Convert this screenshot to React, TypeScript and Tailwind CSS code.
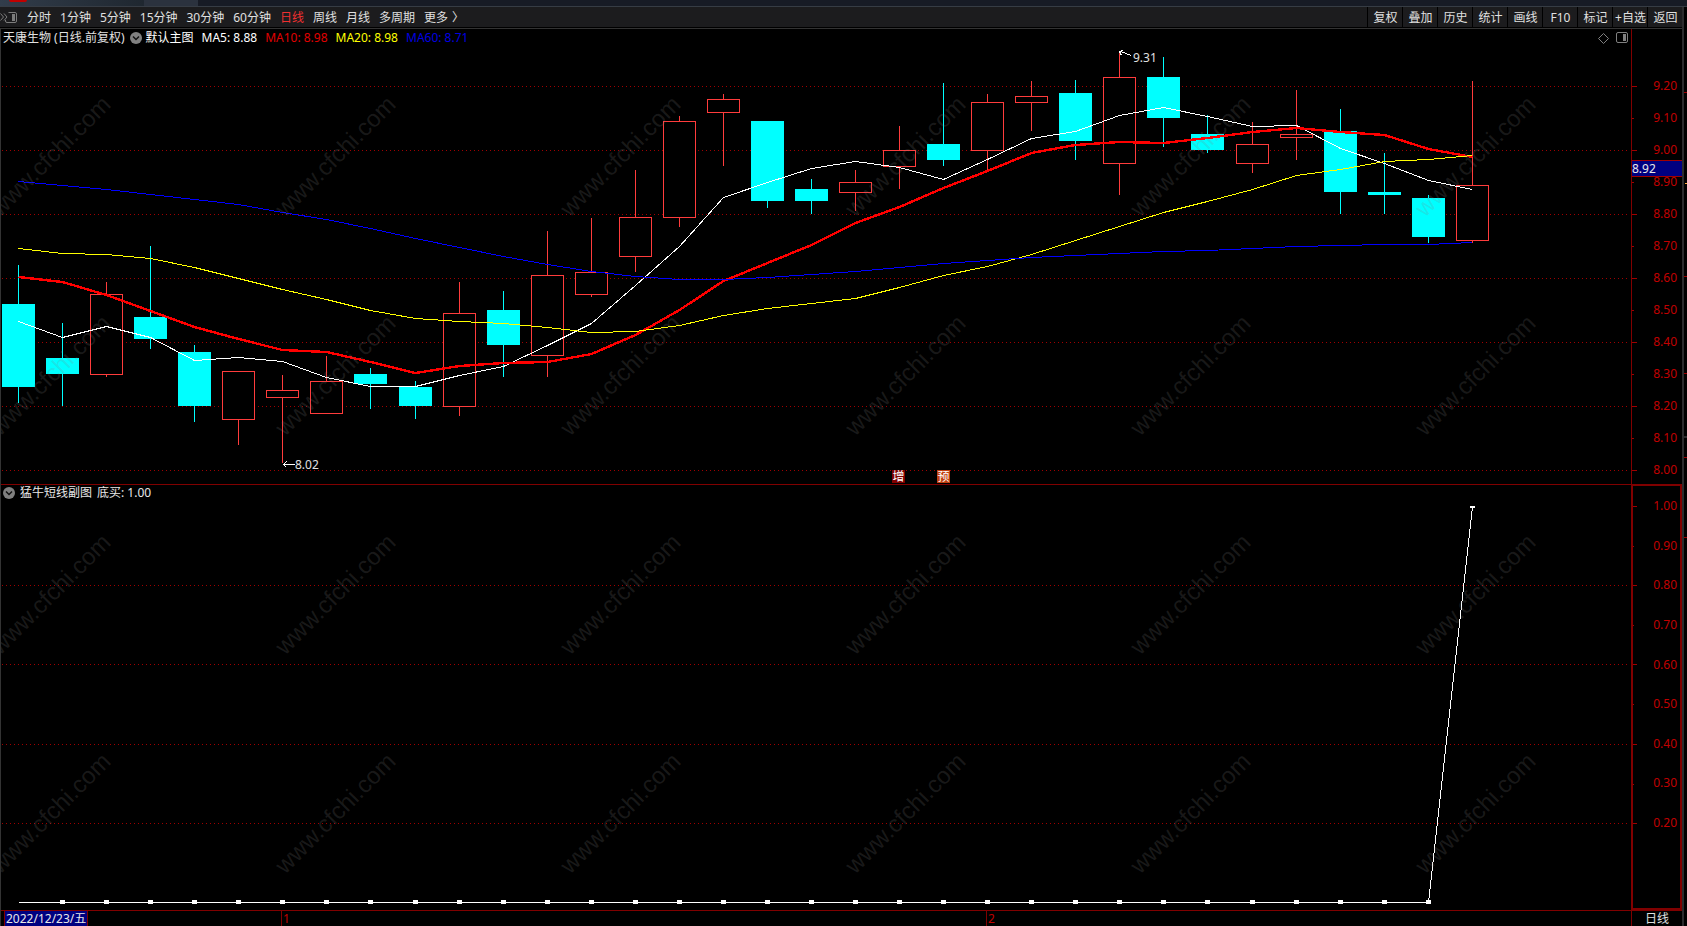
import React from 'react';

type Candle = { up: boolean; high: number; top: number; bottom: number; low: number };

const FONT = "font-['Noto_Sans','Noto_Sans_CJK_SC',sans-serif]";

// chart coordinate space, shared by both panels
const LEFT = 1;
const CHART_W = 1630;
const MAIN_TOP = 29;
const MAIN_H = 455;
const SUB_TOP = 485;
const SUB_H = 425;

const xAt = (i: number) => Math.floor(18.51 + i * 44.055);
const pctX = (x: number) => `${((x - LEFT) / CHART_W) * 100}%`;
const pctY = (y: number) => `${((y - MAIN_TOP) / MAIN_H) * 100}%`;

const up = (high: number, top: number, bottom: number, low: number): Candle => ({ up: true, high, top, bottom, low });
const down = (high: number, top: number, bottom: number, low: number): Candle => ({ up: false, high, top, bottom, low });

const candles: Candle[] = [
  down(265, 304, 387, 403),
  down(323, 358, 374, 406),
  up(282, 294, 375, 377),
  down(246, 317, 339, 349),
  down(345, 352, 406, 422),
  up(371, 371, 420, 445),
  up(375, 390, 398, 463),
  up(356, 381, 414, 414),
  down(368, 374, 384, 409),
  down(381, 387, 406, 419),
  up(282, 313, 407, 416),
  down(291, 310, 345, 377),
  up(231, 275, 356, 377),
  up(218, 272, 295, 297),
  up(170, 217, 257, 272),
  up(116, 121, 218, 227),
  up(94, 99, 113, 166),
  down(121, 121, 201, 208),
  down(179, 189, 201, 214),
  up(170, 182, 193, 211),
  up(126, 150, 167, 189),
  down(83, 144, 160, 166),
  up(94, 102, 151, 170),
  up(81, 96, 103, 131),
  down(80, 93, 141, 160),
  up(52, 77, 164, 195),
  down(57, 77, 118, 147),
  down(115, 134, 150, 153),
  up(122, 144, 164, 173),
  up(90, 134, 138, 160),
  down(109, 131, 192, 214),
  down(153, 192, 195, 214),
  down(195, 198, 237, 243),
  up(81, 185, 241, 243),
];

const averages = [
  {
    label: 'MA5: 8.88',
    textClass: 'text-white',
    color: '#ffffff',
    width: 1,
    values: [321, 337, 326, 337, 360, 357, 361, 377, 386, 386, 375, 366, 345, 323, 285, 246, 197, 182, 168, 161, 167, 179, 159, 138, 131, 115, 107, 116, 126, 125, 148, 163, 180, 189],
  },
  {
    label: 'MA10: 8.98',
    textClass: 'text-[#e00000]',
    color: '#ff0000',
    width: 2.4,
    values: [277, 282, 295, 311, 327, 339, 350, 352, 362, 373, 366, 363, 362, 354, 335, 310, 281, 263, 245, 223, 207, 188, 171, 153, 145, 142, 143, 138, 132, 128, 132, 135, 149, 157],
  },
  {
    label: 'MA20: 8.98',
    textClass: 'text-[#ffff00]',
    color: '#ffff00',
    width: 1,
    values: [248, 253, 254, 258, 267, 278, 289, 299, 310, 318, 321, 323, 327, 332, 331, 325, 315, 308, 303, 298, 287, 275, 266, 254, 240, 226, 212, 201, 189, 175, 169, 161, 159, 155],
  },
  {
    label: 'MA60: 8.71',
    textClass: 'text-[#0000e0]',
    color: '#0000ff',
    width: 1,
    values: [181, 185, 189, 194, 199, 204, 212, 219, 228, 238, 247, 256, 264, 271, 276, 279, 279, 277, 274, 271, 267, 263, 260, 257, 255, 253, 251, 250, 248, 246, 245, 244, 244, 242],
  },
];

const periods = ['分时', '1分钟', '5分钟', '15分钟', '30分钟', '60分钟', '日线', '周线', '月线', '多周期'];
const tools = ['复权', '叠加', '历史', '统计', '画线', 'F10', '标记', '+自选', '返回'];

const priceLabels = ['9.20', '9.10', '9.00', '8.90', '8.80', '8.70', '8.60', '8.50', '8.40', '8.30', '8.20', '8.10', '8.00'];
const subLabels = ['1.00', '0.90', '0.80', '0.70', '0.60', '0.50', '0.40', '0.30', '0.20'];
const subTicks = [506, 546, 585, 625, 664, 704, 744, 784, 823];

const PanelIcon: React.FC<{ className?: string }> = ({ className }) => (
  <svg width="12" height="12" viewBox="0 0 12 12" className={className} aria-hidden="true">
    <rect x="0.5" y="0.5" width="11" height="10" rx="1.5" fill="none" stroke="currentColor" />
    <rect x="7" y="2" width="3" height="7" fill="currentColor" />
  </svg>
);

const DropButton: React.FC<{ label: string }> = ({ label }) => (
  <button aria-label={label} className="shrink-0">
    <svg width="12" height="12" viewBox="0 0 12 12" className="block">
      <circle cx="6" cy="6" r="6" fill="#808080" />
      <path d="M3 4.5 L6 7.5 L9 4.5" fill="none" stroke="#111" strokeWidth="1.5" />
    </svg>
  </button>
);

const Toolbar = () => (
  <nav className="flex h-[20px] shrink-0 items-stretch justify-between bg-[#1c1c1e] text-xs leading-4 text-[#e0e0e0]">
    <div className="flex items-center gap-[9px] pt-[2px]">
      <button aria-label="侧栏" className="flex w-[18px] items-center text-[#7c7c7c]">
        <svg width="18" height="12" viewBox="0 0 18 12" fill="none" stroke="currentColor">
          <path d="M0.5 1.5 L3.5 5 L0.5 8.5 M4 1.5 L7 5 L4 8.5" />
          <path d="M8.5 0.5 H15 Q16.500 0.5 16.500 2 V9 Q16.500 10.500 15 10.500 H7 Q5.500 10.500 5.500 9 V8" />
          <rect x="12" y="2" width="3" height="7" fill="currentColor" stroke="none" />
        </svg>
      </button>
      {periods.map((p) => (
        <button key={p} className={p === '日线' ? 'text-[#f03030]' : ''}>
          {p}
        </button>
      ))}
      <button className="flex gap-1">
        <span>更多</span>
        <span>〉</span>
      </button>
    </div>
    <div className="flex">
      {tools.map((tool) => (
        <button key={tool} className="h-full w-[35px] border-l border-black pt-[2px] pl-px whitespace-nowrap">
          {tool}
        </button>
      ))}
    </div>
  </nav>
);

const MainChart = () => (
  <svg
    viewBox={`${LEFT} ${MAIN_TOP} ${CHART_W} ${MAIN_H}`}
    preserveAspectRatio="none"
    shapeRendering="crispEdges"
    className="absolute inset-0 h-full w-full"
  >
    <g transform="translate(0 0.5)" stroke="#a00000" strokeDasharray="1 3">
      {[86, 150, 214, 278, 342, 406, 470].map((y) => (
        <line key={y} x1="2" x2="1628" y1={y} y2={y} />
      ))}
    </g>
    {candles.map((c, i) => {
      const x = xAt(i);
      const color = c.up ? '#ff3c3c' : '#00ffff';
      return (
        <g key={i}>
          <rect x={x} y={c.high} width="1" height={c.low - c.high} fill={color} />
          {c.up ? (
            <rect x={x - 15.5} y={c.top + 0.5} width="32" height={c.bottom - c.top - 1} fill="#000" stroke={color} />
          ) : (
            <rect x={x - 16} y={c.top} width="33" height={c.bottom - c.top} fill={color} />
          )}
        </g>
      );
    })}
    {averages.map((ma) => (
      <polyline
        key={ma.label}
        transform={ma.width > 1 ? 'translate(0.5 0)' : 'translate(0.5 0.5)'}
        points={ma.values.map((y, i) => `${xAt(i)},${y}`).join(' ')}
        fill="none"
        stroke={ma.color}
        strokeWidth={ma.width}
      />
    ))}
    {/* high / low pointers */}
    <g transform="translate(0.5 0.5)" fill="none" stroke="#fff">
      <path d="M1120 51 L1131 55 M1123 50 L1119 51 L1121 55" />
      <path d="M282 464 H294 M286 461 L283 464 L286 467" />
    </g>
  </svg>
);

const SubChart = () => (
  <svg
    viewBox={`${LEFT} ${SUB_TOP} ${CHART_W} ${SUB_H}`}
    preserveAspectRatio="none"
    shapeRendering="crispEdges"
    className="absolute inset-0 h-full w-full"
  >
    <g transform="translate(0 0.5)" stroke="#a00000" strokeDasharray="1 3">
      {[585, 664, 744, 823].map((y) => (
        <line key={y} x1="2" x2="1628" y1={y} y2={y} />
      ))}
    </g>
    <polyline transform="translate(0.5 0.5)" points="18,902 1428,902 1472,506" fill="none" stroke="#fff" />
    {candles.slice(1, -1).map((_, i) => (
      <rect key={i} x={xAt(i + 1) - 2} y="900" width="5" height="4" fill="#fff" />
    ))}
    <rect x="1470" y="506" width="5" height="2" fill="#fff" />
  </svg>
);

const Watermarks = () => (
  <svg className="pointer-events-none absolute inset-0 h-full w-full overflow-hidden" aria-hidden="true">
    {[127, 346, 565, 784].map((y) =>
      [49, 334, 619, 904, 1189, 1474].map((x) => (
        <text
          key={`${x}-${y}`}
          transform={`translate(${x} ${y}) rotate(-45)`}
          textAnchor="middle"
          dominantBaseline="central"
          className="fill-[#808080]/20 font-['Liberation_Sans',sans-serif] text-[24px]"
        >
          www.cfchi.com
        </text>
      )),
    )}
  </svg>
);

const PriceAxis = () => (
  <div className="relative w-[51px] shrink-0 border-l border-[#800000]">
    <svg
      viewBox={`0 ${MAIN_TOP} 50 ${MAIN_H}`}
      preserveAspectRatio="none"
      shapeRendering="crispEdges"
      className="absolute inset-0 h-full w-full"
    >
      {priceLabels.map((label, i) => (
        <rect key={label} x="0" y={86 + i * 32} width={i % 2 ? 2 : 5} height="1" fill="#a00000" />
      ))}
    </svg>
    <ul className="flex h-full flex-col justify-between pt-[49px] pr-[5px] pb-[6px] text-right text-xs leading-4 text-[#c00000]">
      {priceLabels.map((label) => (
        <li key={label}>{label}</li>
      ))}
    </ul>
    <div
      className="absolute inset-x-0 h-[17px] border-y border-[#a00000] bg-[#000080] text-xs leading-[15px] text-[#e8e8e8]"
      style={{ top: pctY(160) }}
    >
      8.92
    </div>
  </div>
);

const SubAxis = () => (
  <div className="relative w-[51px] shrink-0 border-2 border-[#800000]">
    <svg
      viewBox="0 486 47 422"
      preserveAspectRatio="none"
      shapeRendering="crispEdges"
      className="absolute inset-0 h-full w-full"
    >
      {subTicks.map((y, i) => (
        <rect key={y} x="0" y={y} width={i % 2 ? 1 : 4} height="1" fill="#a00000" />
      ))}
    </svg>
    <ul className="flex h-full flex-col justify-between pt-3 pr-[3px] pb-[77px] text-right text-xs leading-4 text-[#c00000]">
      {subLabels.map((label) => (
        <li key={label}>{label}</li>
      ))}
    </ul>
  </div>
);

const SideStrip = () => (
  <svg
    viewBox="0 7 3 919"
    preserveAspectRatio="none"
    shapeRendering="crispEdges"
    className="h-full w-[3px] shrink-0"
    aria-hidden="true"
  >
    {[92, 276, 373, 457, 537].map((y) => (
      <rect key={y} x="0" y={y} width="3" height="1" fill="#a00000" />
    ))}
    <rect x="1" y="183" width="2" height="1" fill="#ffb040" />
    <rect x="0" y="436" width="3" height="2" fill="#2c2c2e" />
  </svg>
);

const App: React.FC = () => {
  return (
    <div className={`flex h-screen flex-col overflow-hidden bg-black ${FONT}`}>
      {/* Window title edge */}
      <div className="flex h-[7px] shrink-0 border-b border-[#363c44] bg-[#171b25]">
        <div className="w-36 bg-linear-to-r from-[#323d4b] to-[#1f2730] pl-[9px]">
          <div className="h-[2px] w-[18px] rounded-b-sm bg-[#c00000]" />
        </div>
        <div className="w-[54px] bg-[#2b323e]" />
      </div>

      <div className="flex min-h-0 flex-1">
        <div className="flex min-w-0 flex-1 flex-col">
          <Toolbar />
          <main className="mt-px flex min-h-0 flex-1 flex-col border-t border-l border-[#333]">
            <div className="relative flex min-h-0 flex-1 flex-col">
              {/* Candles */}
              <section className="flex min-h-0 flex-[455]">
                <div className="relative min-w-0 flex-1">
                  <MainChart />
                  <div className="relative flex items-center justify-between pt-[1px] pr-[3px] pl-[2px] text-xs leading-4">
                    <div className="flex items-center gap-2">
                      <div className="flex items-center gap-1 text-white">
                        <h1 className="pr-px text-[#e0e0e0]">天康生物 (日线.前复权)</h1>
                        <DropButton label="主图指标" />
                        <span>默认主图</span>
                      </div>
                      {averages.map((ma) => (
                        <span key={ma.label} className={ma.textClass}>
                          {ma.label}
                        </span>
                      ))}
                    </div>
                    <div className="flex items-center gap-[7px] text-[#808080]">
                      <button aria-label="标记">
                        <svg width="11" height="11" viewBox="0 0 11 11" className="block">
                          <path d="M5.5 0.5 L10.5 5.5 L5.5 10.5 L0.5 5.5 Z" fill="none" stroke="currentColor" />
                        </svg>
                      </button>
                      <button aria-label="面板">
                        <PanelIcon className="block" />
                      </button>
                    </div>
                  </div>
                  <span
                    className="absolute -translate-y-1/2 text-xs leading-4 text-[#e0e0e0]"
                    style={{ left: pctX(1133), top: pctY(58) }}
                  >
                    9.31
                  </span>
                  <span
                    className="absolute -translate-y-1/2 text-xs leading-4 text-[#e0e0e0]"
                    style={{ left: pctX(295), top: pctY(465) }}
                  >
                    8.02
                  </span>
                  <span
                    className="absolute bottom-px w-[13px] bg-[#800000] text-center text-xs leading-[13px] text-white"
                    style={{ left: pctX(892) }}
                  >
                    增
                  </span>
                  <span
                    className="absolute bottom-px w-[13px] bg-[#c04010] text-center text-xs leading-[13px] text-white"
                    style={{ left: pctX(937) }}
                  >
                    预
                  </span>
                </div>
                <PriceAxis />
              </section>

              {/* Indicator */}
              <section className="flex min-h-0 flex-[426]">
                <div className="relative min-w-0 flex-1 border-t border-[#800000]">
                  <SubChart />
                  <div className="relative flex items-center gap-[5px] pl-[2px] text-xs leading-4 text-[#e8e8e8]">
                    <DropButton label="副图指标" />
                    <h2>猛牛短线副图</h2>
                    <span>底买: 1.00</span>
                  </div>
                </div>
                <SubAxis />
              </section>
              <Watermarks />
            </div>

            {/* Date axis */}
            <footer className="flex h-4 shrink-0 border-t border-[#800000] text-xs leading-[15px]">
              <div className="relative min-w-0 flex-1 pl-[3px]">
                <time dateTime="2022-12-23" className="inline-block border-x border-[#800000] bg-[#000080] px-px text-[#e8e8e8]">
                  2022/12/23/五
                </time>
                <span className="absolute top-0 border-l border-[#800000] pl-px text-[#c00000]" style={{ left: pctX(281) }}>
                  1
                </span>
                <span className="absolute top-0 border-l border-[#800000] pl-px text-[#c00000]" style={{ left: pctX(986) }}>
                  2
                </span>
              </div>
              <div className="w-[51px] border-l border-[#800000] text-center text-[#e0e0e0]">日线</div>
            </footer>
          </main>
        </div>
        <div className="w-[2px] shrink-0 bg-[#2c2c2e]" />
        <SideStrip />
      </div>
    </div>
  );
};

export default App;
